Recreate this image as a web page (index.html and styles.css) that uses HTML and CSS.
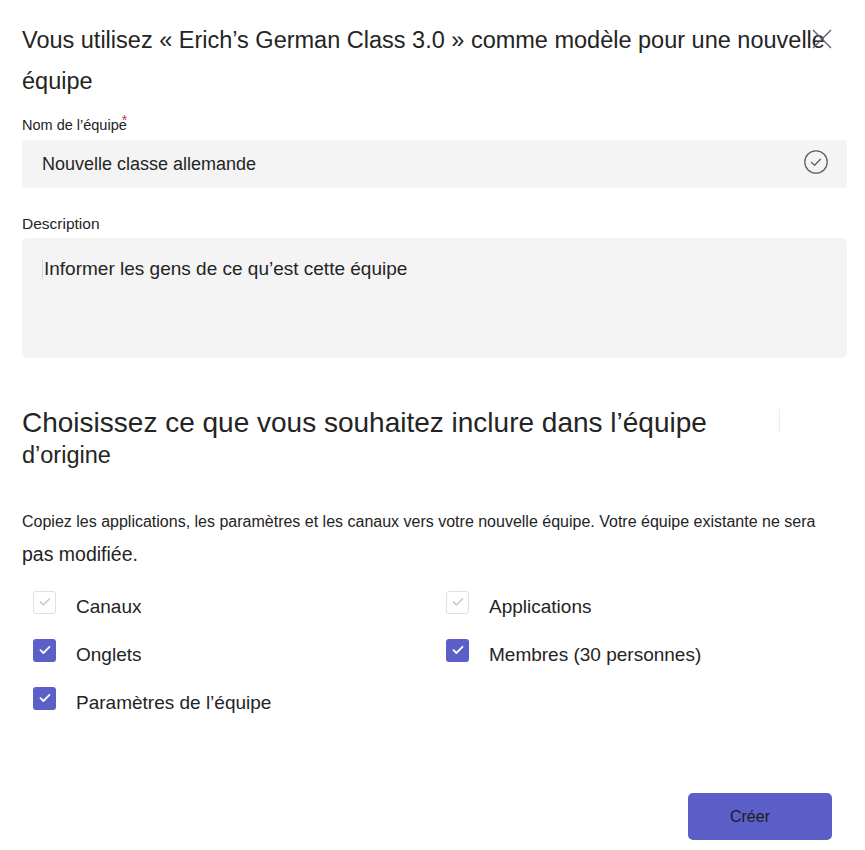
FILE: index.html
```html
<!DOCTYPE html>
<html lang="fr">
<head>
    <title>Créer une équipe à partir d'un modèle</title>
    <meta charset="UTF-8">
    <meta name="viewport" content="width=device-width, initial-scale=1.0">
    <link rel="stylesheet" href="styles.css">
</head>
<body>
    <main class="dialog">
        <header class="dialog-header">
            <h1 class="title">Vous utilisez « Erich’s German Class 3.0 » comme modèle pour une nouvelle équipe</h1>
            <button class="close" aria-label="Fermer">
                <svg width="22" height="22" viewBox="0 0 22 22">
                    <path d="M2 2 L20 20 M20 2 L2 20" stroke="#616161" stroke-width="1.4" fill="none"/>
                </svg>
            </button>
        </header>

        <label class="field-label">Nom de l’équipe<span class="required">*</span></label>
        <div class="input">
            <span>Nouvelle classe allemande</span>
            <svg class="valid" width="26" height="26" viewBox="0 0 26 26">
                <circle cx="13" cy="13" r="11.2" stroke="#616161" stroke-width="1.3" fill="none"/>
                <path d="M8.6 13.4 L11.6 16.2 L17.4 10.2" stroke="#616161" stroke-width="1.3" fill="none" stroke-linecap="round" stroke-linejoin="round"/>
            </svg>
        </div>

        <label class="field-label desc-label">Description</label>
        <div class="textarea">
            <span class="caret"></span>Informer les gens de ce qu’est cette équipe
        </div>

        <h2 class="section-title">
            <span class="section-main">Choisissez ce que vous souhaitez inclure dans l’équipe</span>
            <span class="section-sub">d’origine</span>
        </h2>

        <p class="intro">
            <span class="intro-main">Copiez les applications, les paramètres et les canaux vers votre nouvelle équipe. Votre équipe existante ne sera</span>
            <span class="intro-sub">pas modifiée.</span>
        </p>

        <div class="options">
            <div class="option">
                <span class="box disabled"><svg width="12" height="10" viewBox="0 0 12 10"><path d="M1.5 5.2 L4.4 8 L10.5 1.8" stroke="#c8c8c8" stroke-width="1.6" fill="none" stroke-linecap="round" stroke-linejoin="round"/></svg></span>
                <span class="option-label">Canaux</span>
            </div>
            <div class="option">
                <span class="box disabled"><svg width="12" height="10" viewBox="0 0 12 10"><path d="M1.5 5.2 L4.4 8 L10.5 1.8" stroke="#c8c8c8" stroke-width="1.6" fill="none" stroke-linecap="round" stroke-linejoin="round"/></svg></span>
                <span class="option-label">Applications</span>
            </div>
            <div class="option">
                <span class="box checked"><svg width="12" height="10" viewBox="0 0 12 10"><path d="M1.5 5.2 L4.4 8 L10.5 1.8" stroke="#fff" stroke-width="1.8" fill="none" stroke-linecap="round" stroke-linejoin="round"/></svg></span>
                <span class="option-label">Onglets</span>
            </div>
            <div class="option">
                <span class="box checked"><svg width="12" height="10" viewBox="0 0 12 10"><path d="M1.5 5.2 L4.4 8 L10.5 1.8" stroke="#fff" stroke-width="1.8" fill="none" stroke-linecap="round" stroke-linejoin="round"/></svg></span>
                <span class="option-label">Membres (30 personnes)</span>
            </div>
            <div class="option">
                <span class="box checked"><svg width="12" height="10" viewBox="0 0 12 10"><path d="M1.5 5.2 L4.4 8 L10.5 1.8" stroke="#fff" stroke-width="1.8" fill="none" stroke-linecap="round" stroke-linejoin="round"/></svg></span>
                <span class="option-label">Paramètres de l’équipe</span>
            </div>
        </div>

        <footer class="actions">
            <button class="create">Créer</button>
        </footer>
    </main>
</body>
</html>
```

FILE: styles.css
```css
* {
    box-sizing: border-box;
    margin: 0;
    padding: 0;
}

body {
    background: #fff;
    color: #242424;
    font-family: "Liberation Sans", Arial, sans-serif;
}

.dialog {
    position: relative;
    padding: 20px 18px 0 22px;
}

.dialog-header {
    position: relative;
}

.title {
    font-size: 23.5px;
    font-weight: normal;
    line-height: 41px;
    padding-right: 10px;
}

.close {
    all: unset;
    position: absolute;
    top: 8px;
    right: 14px;
    width: 22px;
    height: 22px;
    cursor: pointer;
}

.field-label {
    display: block;
    font-size: 14.5px;
    line-height: 20px;
    margin-top: 13px;
}

.required {
    color: #c4314b;
    font-size: 14px;
    line-height: 0;
    vertical-align: 5px;
    margin-left: -5px;
}

.input {
    display: flex;
    align-items: center;
    justify-content: space-between;
    height: 48px;
    margin-top: 5px;
    padding: 0 18px 0 20px;
    background: #f4f4f4;
    border-radius: 5px;
    font-size: 18px;
}

.valid {
    margin-top: -4px;
}

.desc-label {
    margin-top: 26px;
    font-size: 15.5px;
}

.textarea {
    height: 120px;
    margin-top: 4px;
    padding: 20px 20px 0 20px;
    background: #f4f4f4;
    border-radius: 5px;
    font-size: 19px;
    line-height: 22px;
}

.caret {
    display: inline-block;
    width: 1px;
    height: 20px;
    margin-right: 1px;
    vertical-align: -4px;
    background: #d6d6d6;
}

.section-title {
    position: relative;
    margin-top: 48px;
    font-weight: normal;
    line-height: 33px;
}

.section-title::after {
    content: "";
    position: absolute;
    top: 3px;
    left: 757px;
    width: 1px;
    height: 24px;
    background: #ececec;
}

.section-main {
    display: block;
    font-size: 28px;
}

.section-sub {
    display: block;
    font-size: 23.5px;
}

.intro {
    margin-top: 34px;
    line-height: 32px;
}

.intro-main {
    display: block;
    font-size: 16px;
}

.intro-sub {
    display: block;
    font-size: 19.5px;
}

.options {
    display: grid;
    grid-template-columns: 413px 1fr;
    margin-top: 8px;
    padding-left: 11px;
}

.option {
    display: flex;
    align-items: center;
    gap: 20px;
    height: 48px;
}

.option-label {
    font-size: 19px;
    padding-top: 9px;
}

.box {
    display: flex;
    align-items: center;
    justify-content: center;
    width: 23px;
    height: 23px;
    border-radius: 3px;
}

.box.disabled {
    border: 1px solid #e0e0e0;
    background: #fff;
}

.box.checked {
    background: #5b5fc7;
}

.actions {
    display: flex;
    justify-content: flex-end;
    margin-top: 71px;
    padding-right: 15px;
}

.create {
    all: unset;
    width: 144px;
    height: 47px;
    padding-right: 20px;
    box-sizing: border-box;
    text-align: center;
    line-height: 47px;
    border-radius: 5px;
    background: #5b5fc7;
    color: #1b1b1b;
    font-size: 16px;
    cursor: pointer;
}
```
